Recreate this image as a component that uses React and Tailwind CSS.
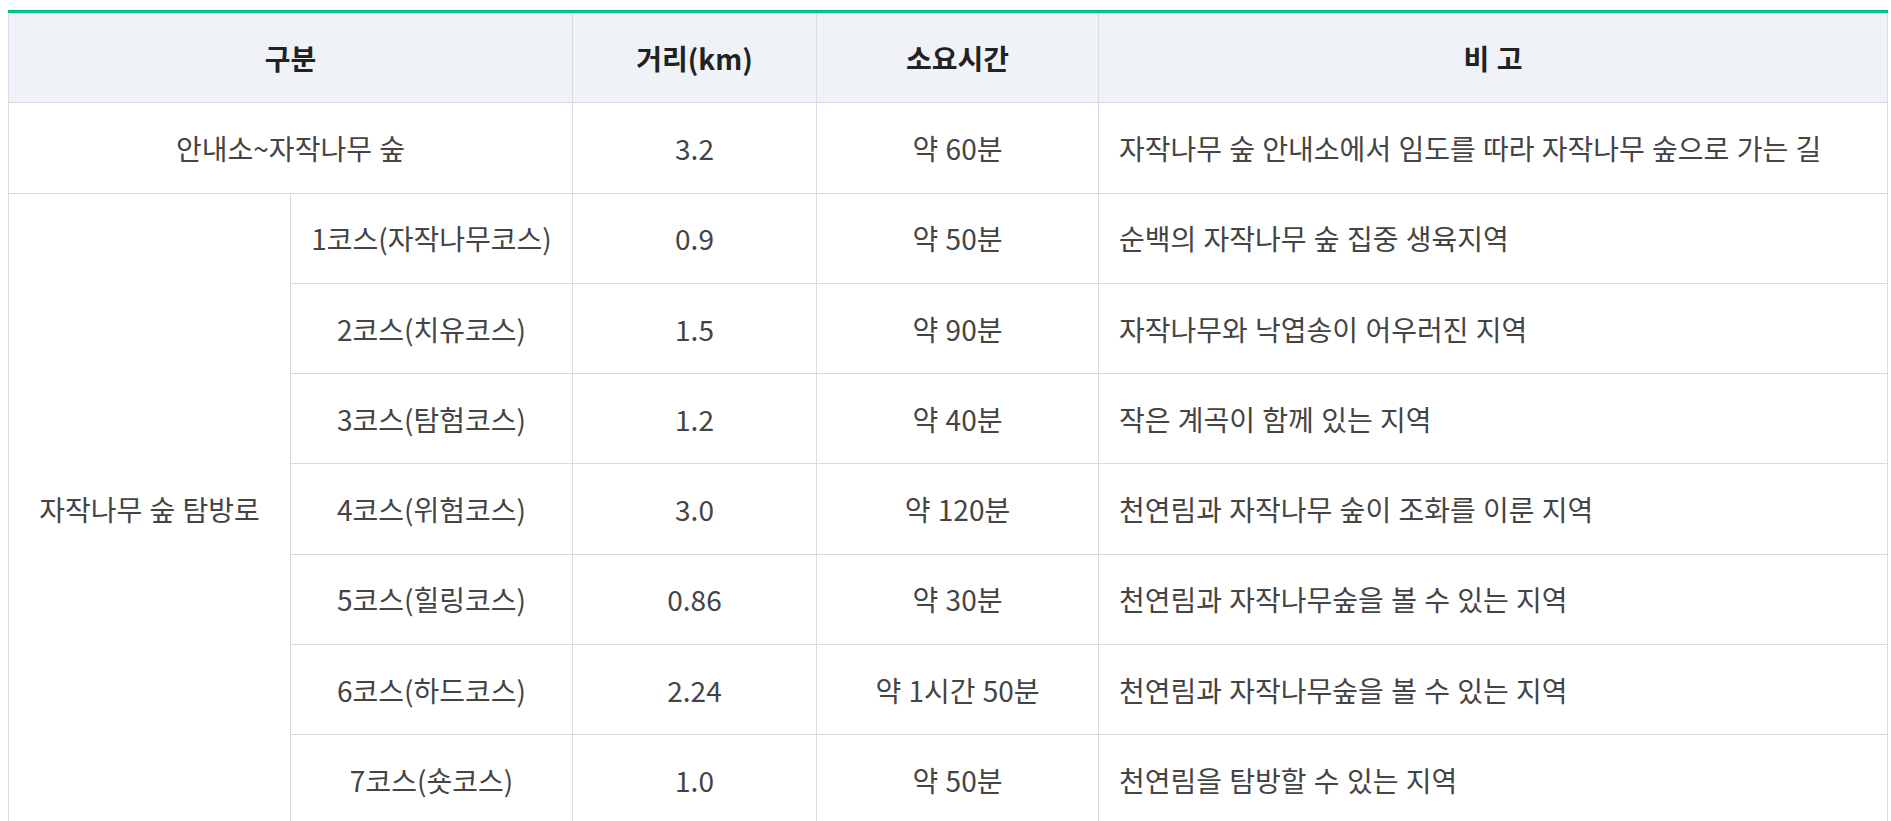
const courses = [
  { name: '1코스(자작나무코스)', dist: '0.9', time: '약 50분', note: '순백의 자작나무 숲 집중 생육지역' },
  { name: '2코스(치유코스)', dist: '1.5', time: '약 90분', note: '자작나무와 낙엽송이 어우러진 지역' },
  { name: '3코스(탐험코스)', dist: '1.2', time: '약 40분', note: '작은 계곡이 함께 있는 지역' },
  { name: '4코스(위험코스)', dist: '3.0', time: '약 120분', note: '천연림과 자작나무 숲이 조화를 이룬 지역' },
  { name: '5코스(힐링코스)', dist: '0.86', time: '약 30분', note: '천연림과 자작나무숲을 볼 수 있는 지역' },
  { name: '6코스(하드코스)', dist: '2.24', time: '약 1시간 50분', note: '천연림과 자작나무숲을 볼 수 있는 지역' },
  { name: '7코스(숏코스)', dist: '1.0', time: '약 50분', note: '천연림을 탐방할 수 있는 지역' },
];

const td = 'border border-[#d8dbe0] text-center h-[90.3px] p-0';
const th = 'border border-[#d8dbe0] text-center h-[91.3px] p-0 font-bold';
const tdNote = 'border border-[#d8dbe0] text-left h-[90.3px] pl-[20px]';

export default function App() {
  return (
    <div className="bg-white min-h-screen pt-[10px] pl-[8px] font-['Noto_Sans_CJK_KR','Noto_Sans',sans-serif] text-[28px] [word-spacing:1px] text-[#444]">
      <table className="w-[1880px] table-fixed border-collapse border-t-[3px] border-t-[#00c48b]">
        <colgroup>
          <col className="w-[282px]" />
          <col className="w-[282px]" />
          <col className="w-[244px]" />
          <col className="w-[282px]" />
          <col />
        </colgroup>
        <thead>
          <tr className="bg-[#eff3f7] text-[#222]">
            <th colSpan={2} className={th}>구분</th>
            <th className={th}>거리(km)</th>
            <th className={th}>소요시간</th>
            <th className={th}>비 고</th>
          </tr>
        </thead>
        <tbody>
          <tr>
            <td colSpan={2} className={td}>안내소~자작나무 숲</td>
            <td className={td}>3.2</td>
            <td className={td}>약 60분</td>
            <td className={tdNote}>자작나무 숲 안내소에서 임도를 따라 자작나무 숲으로 가는 길</td>
          </tr>
          {courses.map((c, i) => (
            <tr key={c.name}>
              {i === 0 && (
                <td rowSpan={courses.length} className={td}>자작나무 숲 탐방로</td>
              )}
              <td className={td}>{c.name}</td>
              <td className={td}>{c.dist}</td>
              <td className={td}>{c.time}</td>
              <td className={tdNote}>{c.note}</td>
            </tr>
          ))}
        </tbody>
      </table>
    </div>
  );
}
